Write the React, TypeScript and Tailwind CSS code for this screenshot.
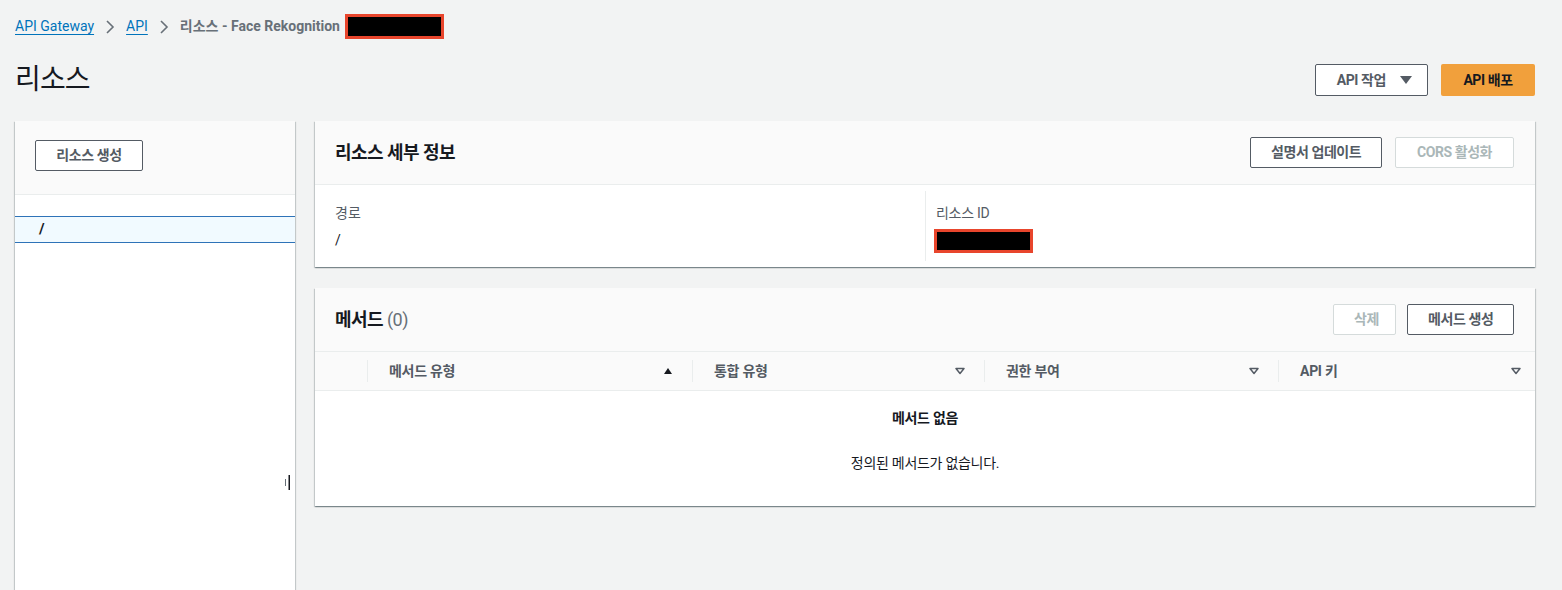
import React from 'react';

const font = { fontFamily: 'Roboto, "Noto Sans CJK KR", sans-serif' };
const panelShadow =
  'shadow-[0_1px_1px_0_rgba(0,28,36,0.3),1px_1px_1px_0_rgba(0,28,36,0.15),-1px_1px_1px_0_rgba(0,28,36,0.15)]';

const Redacted: React.FC<{ className?: string }> = ({ className = '' }) => (
  <div className={`border-[3px] border-[#e8452c] bg-black ${className}`} />
);

const Btn: React.FC<{ children: React.ReactNode; disabled?: boolean; className?: string }> = ({
  children,
  disabled,
  className = '',
}) => (
  <button
    className={`h-[31px] whitespace-nowrap rounded-[2px] border px-[20px] text-[14px] font-bold tracking-[-0.03em] ${
      disabled ? 'border-[#d5dbdb] bg-white text-[#aab7b8]' : 'border-[#545b64] bg-white text-[#545b64]'
    } ${className}`}
  >
    {children}
  </button>
);

const SortDown = () => (
  <svg width="10" height="8" viewBox="0 0 10 8" className="text-[#545b64]">
    <path d="M1 1.5h8L5 6.5z" fill="none" stroke="currentColor" strokeWidth="1.5" strokeLinejoin="round" />
  </svg>
);

const SortUp = () => (
  <svg width="10" height="8" viewBox="0 0 10 8" className="text-[#16191f]">
    <path d="M1 7h8L5 1z" fill="currentColor" />
  </svg>
);

const HeaderCell: React.FC<{ label: string; width?: string; up?: boolean; last?: boolean }> = ({
  label,
  width,
  up,
  last,
}) => (
  <div className={`relative flex h-full items-center pl-[21px] ${last ? 'flex-1 pr-[14px]' : 'pr-[20px]'} ${width ?? ''}`}>
    <span className="flex-1 text-[14px] font-bold tracking-[-0.02em] text-[#545b64]">{label}</span>
    {up ? <SortUp /> : <SortDown />}
    {!last && <div className="absolute right-0 top-[8px] h-[22px] w-px bg-[#eaeded]" />}
  </div>
);

export default function App() {
  return (
    <div className="h-[590px] overflow-hidden bg-[#f2f3f3] pl-[15px] pr-[27px] text-[#16191f]" style={font}>
      {/* breadcrumb */}
      <div className="flex h-[39px] items-center pt-[14px] text-[14px]">
        <a className="text-[#0073bb] underline underline-offset-[3px]">API Gateway</a>
        <svg width="10" height="14" viewBox="0 0 10 14" className="mx-[11px] text-[#687078]">
          <path d="M2 1l6 6-6 6" fill="none" stroke="currentColor" strokeWidth="1.6" />
        </svg>
        <a className="text-[#0073bb] underline underline-offset-[3px]">API</a>
        <svg width="10" height="14" viewBox="0 0 10 14" className="mx-[11px] text-[#687078]">
          <path d="M2 1l6 6-6 6" fill="none" stroke="currentColor" strokeWidth="1.6" />
        </svg>
        <span className="font-bold text-[#687078]">리소스 - Face Rekognition</span>
        <Redacted className="ml-[5px] h-[25px] w-[99px]" />
      </div>

      {/* title row */}
      <div className="mt-[25px] flex h-[32px] items-center justify-between">
        <h1 className="text-[28px] font-normal leading-none tracking-[-0.03em]">리소스</h1>
        <div className="flex gap-[13px]">
          <button className="flex h-[32px] items-center gap-[14px] whitespace-nowrap rounded-[2px] border border-[#545b64] bg-white pl-[21px] pr-[15px] text-[14px] font-bold tracking-[-0.03em] text-[#545b64]">
            API 작업
            <svg width="12" height="9" viewBox="0 0 12 9">
              <path d="M0 0h12L6 8z" fill="#545b64" />
            </svg>
          </button>
          <button className="h-[32px] w-[94px] whitespace-nowrap rounded-[2px] bg-[#f1a03c] text-[14px] font-bold tracking-[-0.03em] text-[#16191f]">
            API 배포
          </button>
        </div>
      </div>

      {/* content */}
      <div className="mt-[25px] flex gap-[20px]">
        {/* tree panel */}
        <div className={`relative h-[500px] w-[280px] shrink-0 bg-white ${panelShadow}`}>
          <div className="h-[74px] border-b border-[#eaeded] bg-[#fafafa] pl-[20px] pt-[19px]">
            <Btn className="w-[108px] px-0">리소스 생성</Btn>
          </div>
          <div className="mt-[21px] flex h-[27px] items-center border-y border-[#2e73b8] bg-[#f1faff] pl-[24px]">
            <span className="text-[15px] font-bold">/</span>
          </div>
          <svg width="6" height="15" viewBox="0 0 6 15" className="absolute left-[270px] top-[354px]">
            <rect x="0" y="4" width="1" height="7" fill="#687078" />
            <rect x="3.5" y="0" width="1.5" height="15" fill="#16191f" />
          </svg>
        </div>

        {/* right column */}
        <div className="flex flex-1 flex-col gap-[21px]">
          {/* details */}
          <div className={`bg-white ${panelShadow}`}>
            <div className="flex h-[64px] items-center justify-between border-b border-[#eaeded] bg-[#fafafa] pl-[20px] pr-[21px]">
              <h2 className="text-[18px] font-bold tracking-[-0.03em]">리소스 세부 정보</h2>
              <div className="flex gap-[13px]">
                <Btn className="w-[132px] px-0">설명서 업데이트</Btn>
                <Btn disabled className="w-[119px] px-0">
                  CORS 활성화
                </Btn>
              </div>
            </div>
            <div className="grid h-[82px] grid-cols-2 py-[6px]">
              <div className="pl-[20px] pt-[12px]">
                <div className="text-[14px] text-[#545b64]">경로</div>
                <div className="mt-[6px] text-[14px]">/</div>
              </div>
              <div className="border-l border-[#eaeded] pl-[10px] pt-[12px]">
                <div className="text-[14px] tracking-[-0.02em] text-[#545b64]">리소스 ID</div>
                <Redacted className="mt-[5px] ml-[-2px] h-[24px] w-[99px]" />
              </div>
            </div>
          </div>

          {/* methods */}
          <div className={`bg-white ${panelShadow}`}>
            <div className="flex h-[64px] items-center justify-between border-b border-[#eaeded] bg-[#fafafa] pl-[20px] pr-[21px]">
              <h2 className="text-[18px] font-bold tracking-[-0.03em]">
                메서드 <span className="font-normal text-[#687078]">(0)</span>
              </h2>
              <div className="flex gap-[11px]">
                <Btn disabled className="w-[63px] px-0">
                  삭제
                </Btn>
                <Btn className="w-[107px] px-0">메서드 생성</Btn>
              </div>
            </div>
            <div className="flex h-[39px] border-b border-[#eaeded] bg-[#fafafa]">
              <div className="relative h-full w-[53px]">
                <div className="absolute right-0 top-[8px] h-[22px] w-px bg-[#eaeded]" />
              </div>
              <HeaderCell label="메서드 유형" width="w-[325px]" up />
              <HeaderCell label="통합 유형" width="w-[292px]" />
              <HeaderCell label="권한 부여" width="w-[294px]" />
              <HeaderCell label="API 키" last />
            </div>
            <div className="flex h-[115px] flex-col items-center pt-[17px] text-[14px] tracking-[-0.02em]">
              <div className="font-bold">메서드 없음</div>
              <div className="mt-[24px]">정의된 메서드가 없습니다.</div>
            </div>
          </div>
        </div>
      </div>
    </div>
  );
}
